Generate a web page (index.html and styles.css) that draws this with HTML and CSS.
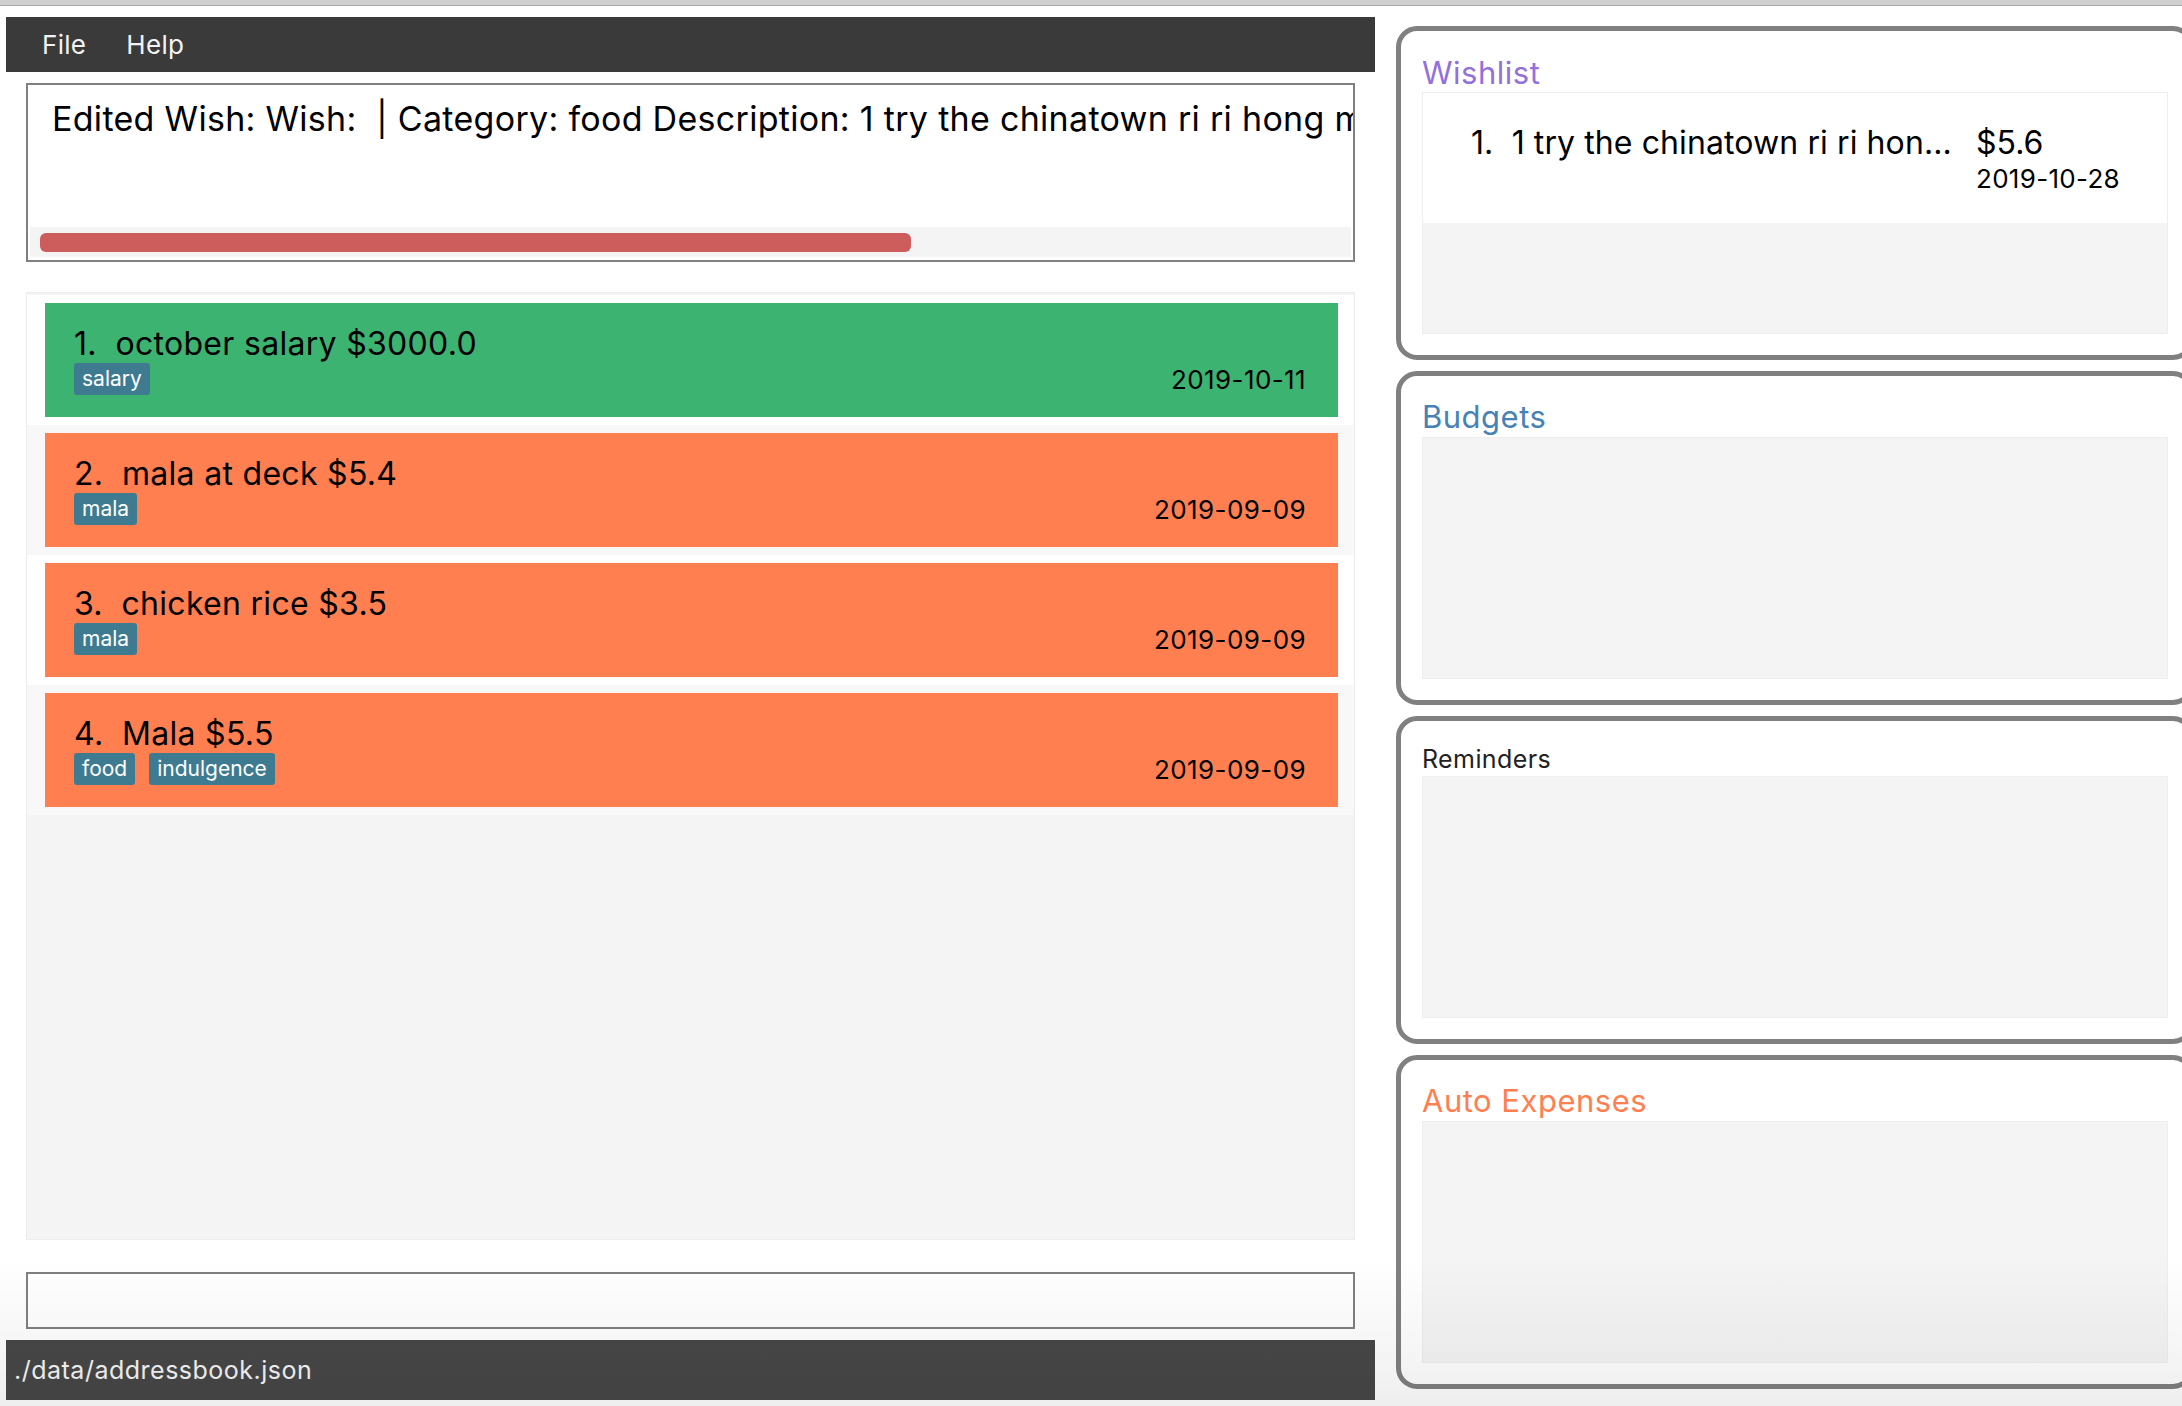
FILE: index.html
```html
<!DOCTYPE html>
<html>
<head>
<meta charset="utf-8">
<title>Expense app</title>
<link rel="stylesheet" href="styles.css">
</head>
<body>
<div class="chrome"></div>
<div class="window">
  <div class="left">
    <div class="menubar">
      <span class="menu-item">File</span>
      <span class="menu-item">Help</span>
    </div>
    <div class="result">
      <div class="result-text">Edited Wish: Wish: &nbsp;| Category: food Description: 1 try the chinatown ri ri hong mala noodles Amount: $5.6 Date: 2019-10-28</div>
      <div class="hscroll"><div class="thumb"></div></div>
    </div>
    <div class="expense-list">
      <div class="cell">
        <div class="card income">
          <div class="card-main">
            <div class="card-title">1.&nbsp; october salary $3000.0</div>
            <div class="tags"><span class="tag">salary</span></div>
          </div>
          <div class="card-date">2019-10-11</div>
        </div>
      </div>
      <div class="cell alt">
        <div class="card expense">
          <div class="card-main">
            <div class="card-title">2.&nbsp; mala at deck $5.4</div>
            <div class="tags"><span class="tag">mala</span></div>
          </div>
          <div class="card-date">2019-09-09</div>
        </div>
      </div>
      <div class="cell">
        <div class="card expense">
          <div class="card-main">
            <div class="card-title">3.&nbsp; chicken rice $3.5</div>
            <div class="tags"><span class="tag">mala</span></div>
          </div>
          <div class="card-date">2019-09-09</div>
        </div>
      </div>
      <div class="cell alt">
        <div class="card expense">
          <div class="card-main">
            <div class="card-title">4.&nbsp; Mala $5.5</div>
            <div class="tags"><span class="tag">food</span><span class="tag">indulgence</span></div>
          </div>
          <div class="card-date">2019-09-09</div>
        </div>
      </div>
    </div>
    <div class="command"></div>
    <div class="status">./data/addressbook.json</div>
  </div>
  <div class="right">
    <section class="panel">
      <div class="panel-title wish">Wishlist</div>
      <div class="plist">
        <div class="wcell">
          <div class="wname">1.&nbsp; 1 try the chinatown ri ri hon...</div>
          <div class="wside">
            <div class="wprice">$5.6</div>
            <div class="wdate">2019-10-28</div>
          </div>
        </div>
      </div>
    </section>
    <section class="panel">
      <div class="panel-title budget">Budgets</div>
      <div class="plist"></div>
    </section>
    <section class="panel">
      <div class="panel-title remind">Reminders</div>
      <div class="plist"></div>
    </section>
    <section class="panel">
      <div class="panel-title auto">Auto Expenses</div>
      <div class="plist"></div>
    </section>
  </div>
  <div class="shade"></div>
</div>
</body>
</html>
```

FILE: styles.css
```css
* { box-sizing: border-box; }

html, body {
  margin: 0;
  padding: 0;
}

body {
  width: 2182px;
  height: 1406px;
  overflow: hidden;
  background: #ececec;
  font-family: Inter, "Noto Sans", sans-serif;
  color: #000;
}

.chrome {
  height: 6px;
  background: #d0d0d0;
  border-bottom: 1px solid #a9a9a9;
}

.window {
  position: relative;
  display: flex;
  height: 1400px;
  background: #fff;
}

.shade {
  position: absolute;
  left: 0;
  right: 0;
  bottom: 0;
  height: 150px;
  pointer-events: none;
  background: linear-gradient(to bottom, rgba(0, 0, 0, 0) 0%, rgba(0, 0, 0, 0.035) 60%, rgba(0, 0, 0, 0.065) 100%);
}

.left {
  width: 1369px;
  margin-left: 6px;
  padding-top: 11px;
  display: flex;
  flex-direction: column;
  flex-shrink: 0;
}

.menubar {
  height: 55px;
  background: #3a3a3a;
  display: flex;
  align-items: center;
  padding-left: 36px;
  gap: 40px;
}

.menu-item {
  color: #f2f2f2;
  font-size: 26px;
  letter-spacing: 0.3px;
}

.result {
  margin: 11px 20px 0 20px;
  height: 179px;
  border: 2px solid #808080;
  background: #fff;
  display: flex;
  flex-direction: column;
}

.result-text {
  flex: 1;
  padding: 14px 0 0 24px;
  font-size: 34px;
  line-height: 40px;
  letter-spacing: 0.3px;
  white-space: nowrap;
  overflow: hidden;
}

.hscroll {
  height: 30px;
  margin: 0 2px 3px 2px;
  background: #f4f4f4;
  padding: 6px 0 0 10px;
}

.thumb {
  width: 871px;
  height: 19px;
  border-radius: 6px;
  background: #cd5c5c;
}

.expense-list {
  margin: 30px 20px 0 20px;
  height: 948px;
  background: #f4f4f4;
  border: 1px solid #ececec;
  padding-top: 2px;
}

.cell {
  background: #fff;
  padding: 8px 16px 8px 18px;
}

.cell.alt {
  background: #f8f8f8;
}

.card {
  height: 114px;
  display: flex;
  align-items: flex-end;
  justify-content: space-between;
  padding: 22px 32px 22px 29px;
}

.card.income { background: #3cb371; }
.card.expense { background: #ff7f50; }

.card-main {
  display: flex;
  flex-direction: column;
}

.card-title {
  font-size: 32px;
  line-height: 38px;
  letter-spacing: 0.3px;
  white-space: nowrap;
}

.tags {
  display: flex;
  gap: 14px;
}

.tag {
  height: 32px;
  line-height: 32px;
  padding: 0 8px;
  background: #3e7b91;
  color: #fff;
  font-size: 21px;
  border-radius: 3px;
}

.card-date {
  font-size: 26px;
  line-height: 31px;
  letter-spacing: 0.4px;
  margin-bottom: 0;
}

.command {
  margin: 32px 20px 0 20px;
  height: 57px;
  border: 2px solid #808080;
  background: #fff;
}

.status {
  margin-top: 11px;
  height: 60px;
  background: #474747;
  color: #f5f5f5;
  font-size: 25px;
  letter-spacing: 0.5px;
  display: flex;
  align-items: center;
  padding-left: 8px;
}

.right {
  width: 798px;
  margin-left: 21px;
  padding-top: 20px;
  flex-shrink: 0;
  display: flex;
  flex-direction: column;
  gap: 11px;
}

.panel {
  border: 5px solid #808080;
  border-radius: 21px;
  background: #fff;
  padding: 23px 21px 21px 21px;
  display: flex;
  flex-direction: column;
}

.panel-title {
  font-size: 31px;
  line-height: 36px;
  letter-spacing: 0.5px;
  margin-bottom: 2px;
}

.panel-title.wish {
  color: #9370db;
  padding-top: 1px;
  margin-bottom: 1px;
}
.panel-title.budget { color: #4682b4; }
.panel-title.auto { color: #ff7f50; }
.panel-title.remind {
  color: #222;
  font-size: 25px;
  line-height: 30px;
  letter-spacing: 0.4px;
}

.plist {
  height: 242px;
  background: #f4f4f4;
  border: 1px solid #eeeeee;
}

.wcell {
  height: 130px;
  background: #fff;
  display: flex;
  padding: 32px 0 0 48px;
}

.wname {
  width: 505px;
  font-size: 32px;
  line-height: 36px;
  letter-spacing: 0.1px;
  white-space: nowrap;
}

.wside {
  display: flex;
  flex-direction: column;
}

.wprice {
  font-size: 32px;
  line-height: 36px;
}

.wdate {
  font-size: 26px;
  line-height: 30px;
  letter-spacing: 0.3px;
  margin-top: 3px;
}
```
